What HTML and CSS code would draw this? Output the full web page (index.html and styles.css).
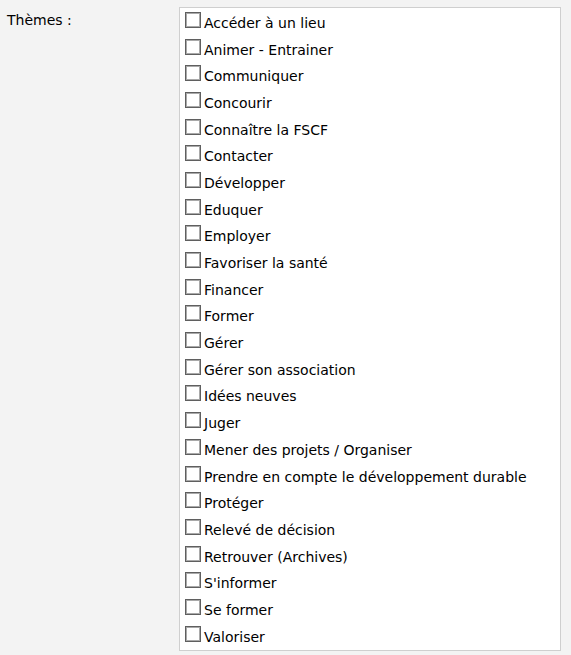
FILE: index.html
```html
<!DOCTYPE html>
<html lang="fr">
<head>
<meta charset="utf-8">
<link rel="stylesheet" href="styles.css">
</head>
<body>
<div class="field">
  <div class="label">Thèmes :</div>
  <div class="box">
    <label class="row"><span class="cb"></span><span class="txt">Accéder à un lieu</span></label>
    <label class="row"><span class="cb"></span><span class="txt">Animer - Entrainer</span></label>
    <label class="row"><span class="cb"></span><span class="txt">Communiquer</span></label>
    <label class="row"><span class="cb"></span><span class="txt">Concourir</span></label>
    <label class="row"><span class="cb"></span><span class="txt">Connaître la FSCF</span></label>
    <label class="row"><span class="cb"></span><span class="txt">Contacter</span></label>
    <label class="row"><span class="cb"></span><span class="txt">Développer</span></label>
    <label class="row"><span class="cb"></span><span class="txt">Eduquer</span></label>
    <label class="row"><span class="cb"></span><span class="txt">Employer</span></label>
    <label class="row"><span class="cb"></span><span class="txt">Favoriser la santé</span></label>
    <label class="row"><span class="cb"></span><span class="txt">Financer</span></label>
    <label class="row"><span class="cb"></span><span class="txt">Former</span></label>
    <label class="row"><span class="cb"></span><span class="txt">Gérer</span></label>
    <label class="row"><span class="cb"></span><span class="txt">Gérer son association</span></label>
    <label class="row"><span class="cb"></span><span class="txt">Idées neuves</span></label>
    <label class="row"><span class="cb"></span><span class="txt">Juger</span></label>
    <label class="row"><span class="cb"></span><span class="txt">Mener des projets / Organiser</span></label>
    <label class="row"><span class="cb"></span><span class="txt">Prendre en compte le développement durable</span></label>
    <label class="row"><span class="cb"></span><span class="txt">Protéger</span></label>
    <label class="row"><span class="cb"></span><span class="txt">Relevé de décision</span></label>
    <label class="row"><span class="cb"></span><span class="txt">Retrouver (Archives)</span></label>
    <label class="row"><span class="cb"></span><span class="txt">S'informer</span></label>
    <label class="row"><span class="cb"></span><span class="txt">Se former</span></label>
    <label class="row"><span class="cb"></span><span class="txt">Valoriser</span></label>
  </div>
</div>
</body>
</html>
```
FILE: styles.css
```css
html, body {
  margin: 0;
  padding: 0;
  background: #f3f3f3;
}
body {
  font-family: "DejaVu Sans", Verdana, sans-serif;
  font-size: 14px;
  color: #000;
}
.field {
  display: flex;
  padding: 7px 0 0 7px;
}
.label {
  width: 172px;
  line-height: 26px;
}
.box {
  width: 380px;
  border: 1px solid #cfcfcf;
  background: #fff;
  display: flex;
  flex-direction: column;
  padding: 0.5px 0;
}
.row {
  height: 26.7px;
  display: flex;
  align-items: center;
  padding-left: 5px;
}
.cb {
  width: 14px;
  height: 14px;
  border: 1px solid #5f5f5f;
  box-shadow: inset 0 0 0 1px #a9a9a9;
  background: #fff;
  margin-right: 3px;
  margin-top: -4px;
  flex: none;
}
.txt {
  white-space: nowrap;
  margin-top: 2px;
}
```
